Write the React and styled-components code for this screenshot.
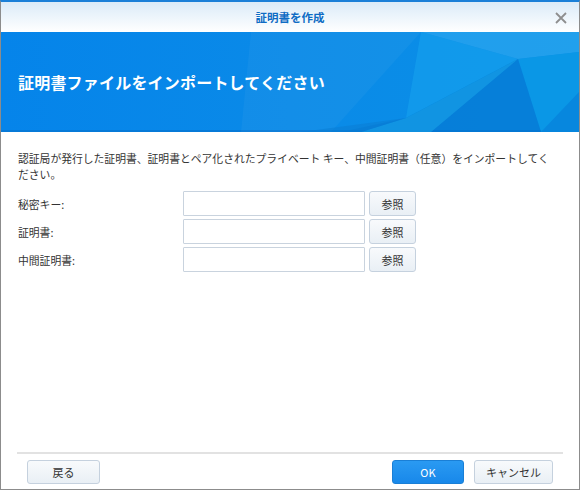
import { Fragment } from "react";
import styled, { createGlobalStyle } from "styled-components";

const Global = createGlobalStyle`
  html, body {
    margin: 0;
    padding: 0;
    background: #ffffff;
  }
  body {
    font-family: "Noto Sans CJK JP", "Noto Sans", sans-serif;
  }
`;

const Window = styled.div`
  box-sizing: border-box;
  width: 580px;
  height: 490px;
  display: flex;
  flex-direction: column;
  border: 1px solid #8c8c8c;
  border-top: 2px solid #1b80d8;
  background: #ffffff;
`;

const TitleBar = styled.div`
  position: relative;
  height: 30px;
  display: flex;
  align-items: center;
  justify-content: center;
  background: linear-gradient(#dbebf8, #ffffff);
`;

const Title = styled.div`
  font-size: 11.5px;
  font-weight: bold;
  color: #0f6cc4;
  text-shadow: 0 0 2px #ffffff;
`;

const Close = styled.button`
  position: absolute;
  right: 10px;
  top: 8px;
  width: 16px;
  height: 16px;
  padding: 0;
  border: none;
  background: none;
  display: flex;
  align-items: center;
  justify-content: center;
`;

const Banner = styled.div`
  position: relative;
  height: 100px;
  display: flex;
  align-items: center;
  padding-left: 17px;
  overflow: hidden;
  background: linear-gradient(90deg, #0584ea 0%, #0a8ae8 50%, #0a90e6 100%);
  box-shadow: inset 0 -2px 0 #077ad8;
`;

const Facets = styled.svg`
  position: absolute;
  left: 0;
  top: 0;
`;

const Heading = styled.h1`
  position: relative;
  margin: 0;
  font-size: 16px;
  font-weight: bold;
  color: #ffffff;
  letter-spacing: 0.2px;
`;

const Body = styled.div`
  flex: 1;
  padding: 18px 16px 0 17px;
`;

const Intro = styled.p`
  margin: 0 0 9px;
  font-size: 10.8px;
  line-height: 16px;
  color: #333333;
`;

const Form = styled.div`
  display: grid;
  grid-template-columns: 161px 182px 47px;
  grid-auto-rows: 25px;
  column-gap: 4px;
  row-gap: 3px;
  align-items: center;
`;

const Label = styled.label`
  font-size: 10.8px;
  color: #333333;
`;

const Field = styled.input`
  box-sizing: border-box;
  height: 25px;
  border: 1px solid #c9d3de;
  border-radius: 1px;
  background: #ffffff;
  outline: none;
`;

const Button = styled.button`
  box-sizing: border-box;
  height: ${(p) => p.h || 25}px;
  width: ${(p) => (p.w ? `${p.w}px` : "auto")};
  padding: 0;
  border: 1px solid ${(p) => (p.primary ? "#1a7fd6" : "#c5d1de")};
  border-radius: 3px;
  background: ${(p) =>
    p.primary
      ? "linear-gradient(#2a9af2, #1888ea)"
      : "linear-gradient(#f8fafc, #e9eff5)"};
  color: ${(p) => (p.primary ? "#ffffff" : "#333333")};
  font-family: "Noto Sans CJK JP", "Noto Sans", sans-serif;
  font-size: 11px;
`;

const Footer = styled.div`
  margin: 0 16px;
  border-top: 2px solid #e2e2e2;
  padding: 6px 10px 5px;
  display: flex;
  align-items: center;
  gap: 10px;
`;

const Spacer = styled.div`
  flex: 1;
`;

const rows = ["秘密キー:", "証明書:", "中間証明書:"];

export default function App() {
  return (
    <>
      <Global />
      <Window>
        <TitleBar>
          <Title>証明書を作成</Title>
          <Close aria-label="close">
            <svg width="12" height="12" viewBox="0 0 12 12">
              <path
                d="M1 1 L11 11 M11 1 L1 11"
                stroke="#8e8e8e"
                strokeWidth="1.8"
                fill="none"
              />
            </svg>
          </Close>
        </TitleBar>
        <Banner>
          <Facets width="578" height="100" viewBox="0 0 578 100">
            <polygon points="250,0 420,0 330,100 240,100" fill="#ffffff" opacity="0.04" />
            <polygon points="420,0 578,0 578,20 517,27" fill="#3fb4f4" opacity="0.45" />
            <polygon points="517,27 578,20 578,100 540,100" fill="#0a98e6" opacity="0.8" />
            <polygon points="420,0 517,27 405,86" fill="#18a4ee" opacity="0.55" />
            <polygon points="405,86 517,27 540,100 340,100" fill="#0474d0" opacity="0.6" />
            <polygon points="405,86 517,27 430,100 360,100" fill="#1eb0ee" opacity="0.45" />
            <polygon points="300,100 405,86 360,100" fill="#0a7ed6" opacity="0.6" />
            <polygon points="540,100 578,60 578,100" fill="#0680da" opacity="0.7" />
          </Facets>
          <Heading>証明書ファイルをインポートしてください</Heading>
        </Banner>
        <Body>
          <Intro>
            認証局が発行した証明書、証明書とペア化されたプライベート
            キー、中間証明書（任意）をインポートしてく
            <br />
            ださい。
          </Intro>
          <Form>
            {rows.map((r) => (
              <Fragment key={r}>
                <Label>{r}</Label>
                <Field />
                <Button>参照</Button>
              </Fragment>
            ))}
          </Form>
        </Body>
        <Footer>
          <Button w={73} h={24}>戻る</Button>
          <Spacer />
          <Button primary w={72} h={24}>OK</Button>
          <Button w={79} h={24}>キャンセル</Button>
        </Footer>
      </Window>
    </>
  );
}
